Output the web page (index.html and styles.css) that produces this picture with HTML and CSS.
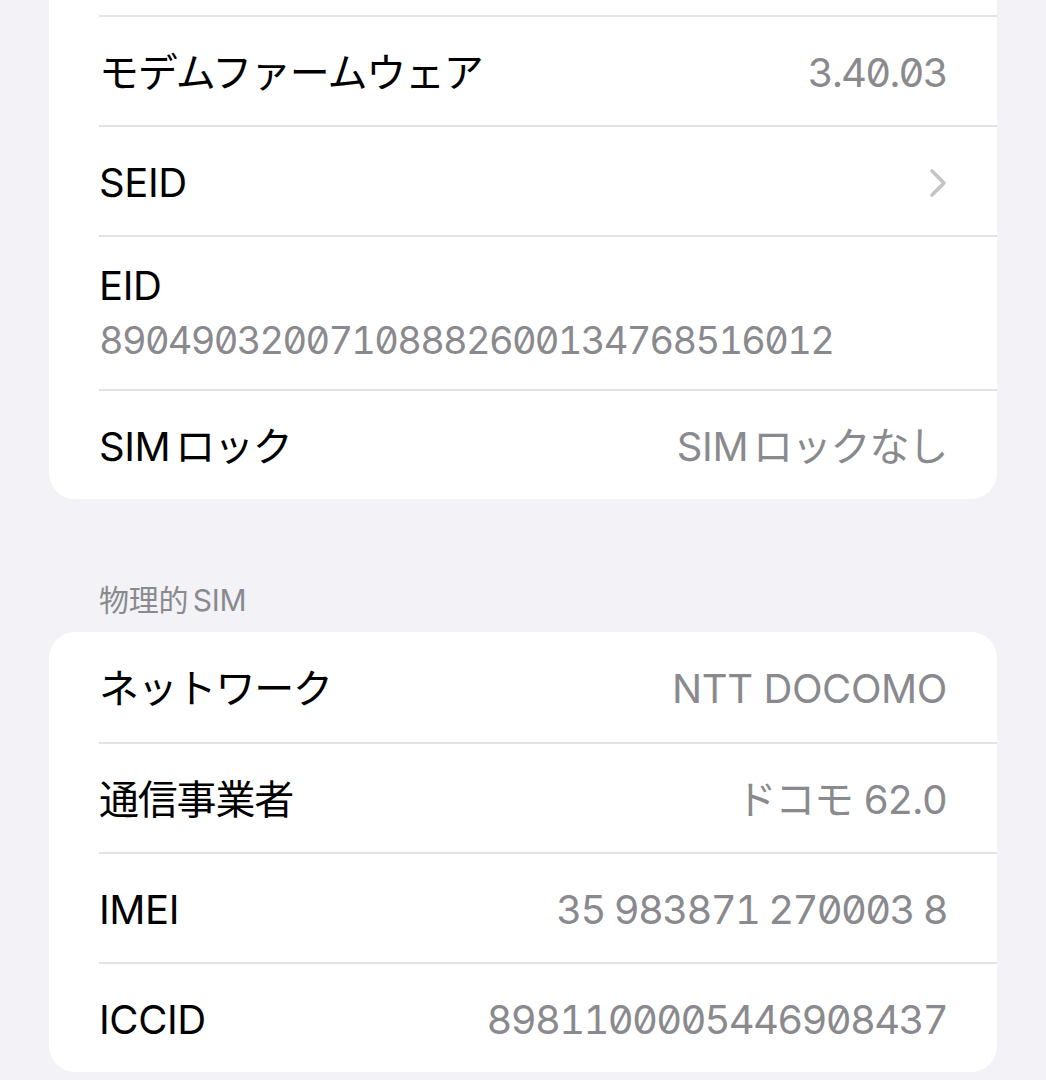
FILE: index.html
```html
<!DOCTYPE html>
<html lang="ja">
<head>
<meta charset="utf-8">
<title>情報</title>
<link rel="stylesheet" href="styles.css">
</head>
<body>
<main class="page">
  <section class="card card-top">
    <div class="row row-hidden"></div>
    <div class="row">
      <span class="label ja">モデムファームウェア</span>
      <span class="value num">3.40.03</span>
    </div>
    <div class="row">
      <span class="label">SEID</span>
      <svg class="chevron" width="18" height="30" viewBox="0 0 18 30" aria-hidden="true">
        <polyline points="3,3 15,15 3,27" fill="none" stroke="#c4c4c7" stroke-width="3.6" stroke-linecap="round" stroke-linejoin="round"/>
      </svg>
    </div>
    <div class="row row-stack">
      <span class="label">EID</span>
      <span class="value num value-sub">89049032007108882600134768516012</span>
    </div>
    <div class="row">
      <span class="label mixed">SIM <span class="ja">ロック</span></span>
      <span class="value mixed">SIM <span class="ja">ロックなし</span></span>
    </div>
  </section>

  <h2 class="section-header mixed">物理的 SIM</h2>

  <section class="card">
    <div class="row">
      <span class="label ja">ネットワーク</span>
      <span class="value">NTT DOCOMO</span>
    </div>
    <div class="row">
      <span class="label ja">通信事業者</span>
      <span class="value"><span class="ja">ドコモ</span> 62.0</span>
    </div>
    <div class="row">
      <span class="label">IMEI</span>
      <span class="value num">35 983871 270003 8</span>
    </div>
    <div class="row">
      <span class="label">ICCID</span>
      <span class="value num">8981100005446908437</span>
    </div>
  </section>
</main>
</body>
</html>
```

FILE: styles.css
```css
html, body {
  margin: 0;
  padding: 0;
  background: #f2f2f7;
}

body {
  font-family: "Inter", "Noto Sans CJK JP", sans-serif;
  color: #000;
  overflow: hidden;
}

.page {
  padding: 0 49px;
}

.card {
  background: #fff;
  border-radius: 26px;
  overflow: hidden;
}

.card-top {
  margin-top: -95px;
  border-top-left-radius: 0;
  border-top-right-radius: 0;
}

.row {
  display: flex;
  align-items: center;
  justify-content: space-between;
  box-sizing: border-box;
  height: 110px;
  margin-left: 50px;
  padding-right: 50px;
  padding-top: 3px;
  border-top: 2px solid #e3e3e7;
}

.row:first-child {
  border-top: none;
}

.row-stack {
  height: 154px;
  flex-direction: column;
  align-items: flex-start;
  justify-content: flex-start;
  gap: 7px;
  padding-top: 25px;
}

.label {
  font-size: 40px;
  line-height: 48px;
  letter-spacing: -0.4px;
  white-space: nowrap;
}

.value {
  font-size: 40px;
  line-height: 48px;
  color: #8a8a8e;
  white-space: nowrap;
  letter-spacing: -0.4px;
}

.ja {
  letter-spacing: -1.2px;
}

.mixed {
  word-spacing: -6px;
}

.num {
  font-feature-settings: "tnum" 1, "zero" 1;
  letter-spacing: -1.7px;
}

.value-sub {
  font-size: 38px;
  line-height: 46px;
}

.chevron {
  display: block;
}

.section-header {
  margin: 0;
  padding: 83px 0 14px 50px;
  font-size: 30px;
  line-height: 36px;
  font-weight: 400;
  color: #8a8a8e;
  letter-spacing: -0.2px;
}

.section-header.mixed {
  word-spacing: -4px;
}
```
